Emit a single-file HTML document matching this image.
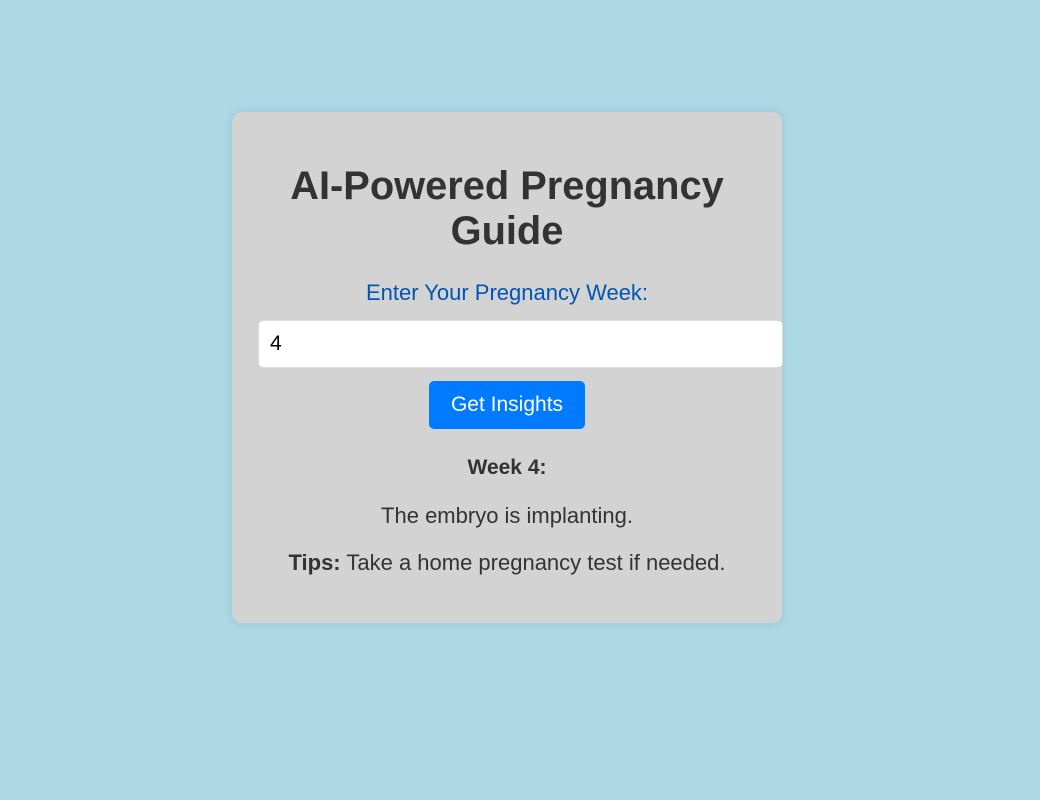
<!DOCTYPE html>
<html><head><style>
body{margin:0;background:#add8e6;font-family:"Liberation Sans",Arial,sans-serif;width:1040px;height:800px;overflow:hidden;}
.card{position:absolute;left:232px;top:112px;width:550px;height:511px;background:#d3d3d3;border-radius:10px;box-shadow:0 0 10px rgba(0,0,0,0.1);text-align:center;color:#333;}
h1{position:absolute;left:0;right:0;top:52px;margin:0;font-size:39.8px;line-height:45px;font-weight:bold;color:#333;}
.lbl{position:absolute;left:0;right:0;top:169px;font-size:22px;color:#0056b3;line-height:24px;}
.inp{position:absolute;left:26px;top:208px;height:46px;background:#fff;border:1px solid #ddd;border-radius:5px;text-align:left;font-size:21px;line-height:46px;padding-left:11px;box-sizing:content-box;color:#000;width:512px;}
.btn{position:absolute;left:197px;top:269px;width:156px;height:48px;background:#007bff;border-radius:5px;color:#fff;font-size:21px;line-height:48px;}
.p{position:absolute;left:0;right:0;font-size:22px;line-height:24px;}
</style></head><body>
<div class="card">
<h1>AI-Powered Pregnancy<br>Guide</h1>
<div class="lbl">Enter Your Pregnancy Week:</div>
<div class="inp">4</div>
<div class="btn">Get Insights</div>
<div class="p" style="top:344px;font-weight:bold;font-size:21px">Week 4:</div>
<div class="p" style="top:392px">The embryo is implanting.</div>
<div class="p" style="top:439px"><b>Tips:</b> Take a home pregnancy test if needed.</div>
</div>
</body></html>
